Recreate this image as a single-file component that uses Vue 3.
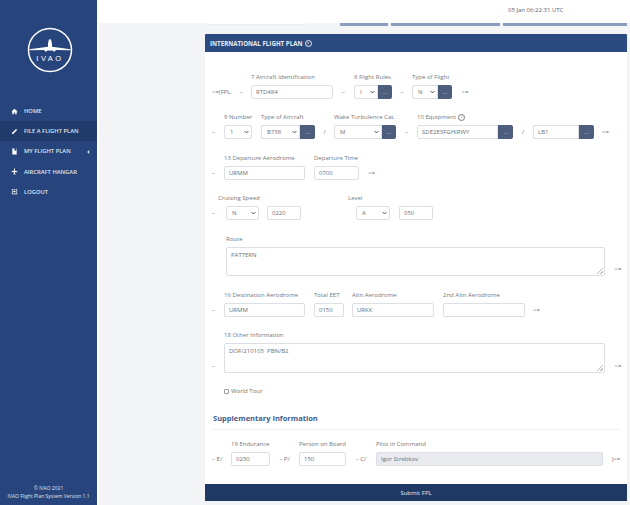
<script setup>
const menu = [
  { name: 'HOME', icon: 'home' },
  { name: 'FILE A FLIGHT PLAN', icon: 'pencil', active: true },
  { name: 'MY FLIGHT PLAN', icon: 'book', arrow: true },
  { name: 'AIRCRAFT HANGAR', icon: 'plane' },
  { name: 'LOGOUT', icon: 'logout' }
]

const icons = {
  home: 'M8 1.500 1 8h2v6h3.500v-4h3v4H13V8h2z',
  pencil: 'M11.500 2 14 4.500 5.500 13 2 14l1-3.500z',
  book: 'M3 1h10v14H3zM8 1v6l2-1.500L12 7V1z',
  plane: 'M7 1h2l.6 5 5.400 2v1.600L9.600 9l-.5 3.600 2 1.400v1L8 14.400 4.900 15v-1l2-1.400L6.400 9 1 9.600V8l5.400-2z',
  logout: 'M2 2h12v12H2zM3.500 3.500v9h9v-9zM5 7h3V5l3 3-3 3V9H5z'
}

const rows = [
  {
    items: [
      { text: '<=(FPL', w: 27, lead: true },
      { text: '–', w: 19 },
      { label: '7 Aircraft Identification', ctl: 'input', v: 'RTD484', w: 82 },
      { text: '–', w: 21 },
      { label: '8 Flight Rules', ctl: 'select', v: 'I', w: 24, btn: 14 },
      { text: '–', w: 20 },
      { label: 'Type of Flight', ctl: 'select', v: 'N', w: 26, btn: 14 },
      { text: '<=', w: 26 }
    ]
  },
  {
    tight: true,
    items: [
      { text: '–', w: 19, lead: true },
      { label: '9 Number', ctl: 'select', v: '1', w: 28 },
      { w: 9 },
      { label: 'Type of Aircraft', ctl: 'select', v: 'B738', w: 39, btn: 15 },
      { text: '/', w: 19 },
      { label: 'Wake Turbulence Cat.', ctl: 'select', v: 'M', w: 48, btn: 14 },
      { text: '–', w: 21 },
      { label: '10 Equipment', help: true, ctl: 'input', v: 'SDE2E3FGHIRWY', w: 81, btn: 15 },
      { text: '/', w: 20 },
      { label: '', ctl: 'input', v: 'LB1', w: 46, btn: 15 },
      { text: '<=', w: 23 }
    ]
  },
  {
    items: [
      { text: '–', w: 19, lead: true },
      { label: '13 Departure Aerodrome', ctl: 'input', v: 'URMM', w: 81 },
      { w: 9 },
      { label: 'Departure Time', ctl: 'input', v: '0700', w: 45 },
      { text: '<=', w: 25 }
    ]
  },
  {
    tight: true,
    items: [
      { text: '–', w: 21, lead: true },
      { label: 'Cruising Speed', shift: true, ctl: 'select', v: 'N', w: 33 },
      { w: 8 },
      { label: '', ctl: 'input', v: '0220', w: 34 },
      { w: 55 },
      { label: 'Level', shift: true, ctl: 'select', v: 'A', w: 34 },
      { w: 9 },
      { label: '', ctl: 'input', v: '050', w: 34 }
    ]
  },
  {
    items: [
      { w: 21 },
      { label: 'Route', ctl: 'area', v: 'PATTERN', w: 379, h: 29 },
      { text: '<=', w: 26 }
    ]
  },
  {
    items: [
      { text: '–', w: 19, lead: true },
      { label: '16 Destination Aerodrome', ctl: 'input', v: 'URMM', w: 81 },
      { w: 9 },
      { label: 'Total EET', ctl: 'input', v: '0150', w: 30 },
      { w: 8 },
      { label: 'Altn Aerodrome', ctl: 'input', v: 'URKK', w: 82 },
      { w: 9 },
      { label: '2nd Altn Aerodrome', ctl: 'input', v: '', w: 82 },
      { text: '<=', w: 23 }
    ]
  },
  {
    tight: true,
    items: [
      { text: '–', w: 19, lead: true },
      { label: '18 Other Information', ctl: 'area', v: 'DOF/210105  PBN/B2', w: 381, h: 30 },
      { text: '<=', w: 26 }
    ]
  }
]

const supplementary = [
  { text: '– E/', w: 26, lead: true },
  { label: '19 Endurance', ctl: 'input', v: '0230', w: 39 },
  { text: '– P/', w: 29 },
  { label: 'Person on Board', ctl: 'input', v: '150', w: 47 },
  { text: '– C/', w: 30 },
  { label: 'Pilot in Command', ctl: 'input', v: 'Igor Strebkov', w: 227, grey: true },
  { text: ')<=', w: 26 }
]
</script>

<template>
  <div class="page">
    <aside class="sidebar">
      <div class="logo">
        <svg width="46" height="46" viewBox="0 0 46 46">
          <circle cx="23" cy="23" r="21.500" fill="none" stroke="#fff" stroke-width="1.500" />
          <path fill="#fff" d="M21 18c0-3 1-6 2-6s2 3 2 6v1.800l18.500 2.400v1l-14.500-.3-1.200 1.700h-1l-1.300-1.100h-5l-1.300 1.100h-1L17 22.900l-14.500.3v-1L21 19.800z" />
          <text x="23" y="33.500" class="logo-text" text-anchor="middle">IVAO</text>
        </svg>
      </div>
      <nav class="menu">
        <div v-for="m in menu" :key="m.name" class="menu-item" :class="{ active: m.active }">
          <svg class="menu-icon" viewBox="0 0 16 16"><path fill="#fff" fill-rule="evenodd" :d="icons[m.icon]" /></svg>
          <span>{{ m.name }}</span>
          <svg v-if="m.arrow" class="menu-arrow" viewBox="0 0 4 6"><path fill="#dfe5f2" d="M3 0v6L0 3z" /></svg>
        </div>
      </nav>
      <footer class="side-footer">
        <div>© IVAO 2021</div>
        <div>IVAO Flight Plan System Version 1.1</div>
      </footer>
    </aside>

    <main class="main">
      <header class="topbar"><span class="clock">05 Jan 06:22:31 UTC</span></header>
      <div class="content">
        <div class="strip">
          <div class="strip-card"></div>
          <div class="strip-btn one"></div>
          <div class="strip-btn two"></div>
          <div class="strip-btn three"></div>
        </div>

        <section class="card">
          <div class="card-title">INTERNATIONAL FLIGHT PLAN <span class="help light">?</span></div>
          <div class="card-body">
            <div v-for="(row, r) in rows" :key="r" class="row" :class="{ tight: row.tight }">
              <template v-for="(it, i) in row.items" :key="i">
                <div v-if="it.ctl" class="field">
                  <div class="label" :class="{ shift: it.shift }">{{ it.label }}<span v-if="it.help" class="help">?</span></div>
                  <div class="control">
                    <textarea v-if="it.ctl === 'area'" class="box area" :style="{ width: it.w + 'px', height: it.h + 'px' }" :value="it.v"></textarea>
                    <div v-else-if="it.ctl === 'select'" class="select-wrap" :style="{ width: it.w + 'px' }">
                      <select class="box pick" :class="{ joined: it.btn }"><option>{{ it.v }}</option></select>
                      <svg class="chevron" viewBox="0 0 8 6"><path d="M1 1.500 4 4.500 7 1.500" fill="none" stroke="#444" stroke-width="1.500" /></svg>
                    </div>
                    <input v-else class="box" :class="{ joined: it.btn, grey: it.grey }" :style="{ width: it.w + 'px' }" :value="it.v" :readonly="it.grey" />
                    <button v-if="it.btn" class="more" :style="{ width: it.btn + 'px' }">...</button>
                  </div>
                </div>
                <div v-else class="sep" :class="{ lead: it.lead }" :style="{ width: it.w + 'px' }">{{ it.text }}</div>
              </template>
            </div>

            <label class="tour"><input type="checkbox" class="check" /> World Tour</label>

            <h3 class="supp-title">Supplementary Information</h3>
            <div class="rule"></div>

            <div class="row supp-row">
              <template v-for="(it, i) in supplementary" :key="i">
                <div v-if="it.ctl" class="field">
                  <div class="label">{{ it.label }}</div>
                  <div class="control">
                    <input class="box" :class="{ grey: it.grey }" :style="{ width: it.w + 'px' }" :value="it.v" :readonly="it.grey" />
                  </div>
                </div>
                <div v-else class="sep" :class="{ lead: it.lead }" :style="{ width: it.w + 'px' }">{{ it.text }}</div>
              </template>
            </div>
          </div>
          <button class="submit">Submit FPL</button>
        </section>
      </div>
    </main>
  </div>
</template>

<style scoped>
.page {
  display: flex;
  width: 630px;
  height: 505px;
  overflow: hidden;
  background: #f3f4f6;
  font-family: "Open Sans", sans-serif;
  font-size: 6px;
  color: #6d7176;
}

.sidebar {
  display: flex;
  flex-direction: column;
  width: 97px;
  flex: none;
  background: #27457c;
  color: #dfe5f2;
}

.logo {
  display: flex;
  justify-content: center;
  padding: 27px 0 0 2px;
  height: 74px;
}

.logo-text {
  fill: #fff;
  font-family: "Liberation Sans", sans-serif;
  font-size: 7.500px;
  letter-spacing: 2.500px;
}

.menu {
  flex: 1;
}

.menu-item {
  display: flex;
  align-items: center;
  height: 20.200px;
  padding-left: 11px;
  font-weight: 600;
  font-size: 5.800px;
  position: relative;
}

.menu-item.active {
  background: #213b6c;
}

.menu-icon {
  width: 7px;
  height: 7px;
  margin-right: 6px;
  flex: none;
}

.menu-arrow {
  position: absolute;
  left: 87px;
  top: 8.500px;
  width: 3px;
  height: 4px;
}

.side-footer {
  text-align: center;
  font-size: 5px;
  line-height: 7.500px;
  padding-bottom: 5px;
}

.main {
  flex: 1;
  min-width: 0;
  border-left: 2px solid #fff;
}

.topbar {
  height: 23px;
  background: #fff;
  position: relative;
}

.clock {
  position: absolute;
  left: 409px;
  top: 6px;
  font-size: 6px;
  color: #60646a;
}

.content {
  padding: 0 3px 0 106px;
}

.strip {
  display: flex;
  height: 12px;
  margin-top: -1px;
}

.strip-card {
  width: 102px;
  height: 3px;
  background: #fff;
  border: 1px solid #eceef1;
  border-top: none;
  box-sizing: border-box;
}

.strip-btn {
  height: 4px;
  background: #8a9bbb;
  border-radius: 0 0 1px 1px;
}

.one {
  width: 48px;
  margin-left: 33px;
}

.two {
  width: 109px;
  margin-left: 3px;
}

.three {
  width: 124px;
  margin-left: 3px;
}

.card {
  background: #fff;
}

.card-title {
  display: flex;
  align-items: center;
  gap: 2px;
  height: 18px;
  padding-left: 5px;
  background: #2a4a80;
  color: #e6eaf3;
  font-weight: 700;
  font-size: 6.200px;
  border-radius: 1px 1px 0 0;
}

.card-body {
  height: 432px;
  padding-top: 21px;
  box-sizing: border-box;
}

.row {
  display: flex;
  align-items: flex-end;
  margin-top: 15px;
}

.row:first-child {
  margin-top: 0;
}

.row.tight {
  margin-top: 14px;
}

.field {
  flex: none;
}

.label {
  height: 9px;
  line-height: 9px;
  margin-bottom: 3px;
  white-space: nowrap;
  width: 0;
  color: #74787d;
}

.label.shift {
  margin-left: -8px;
}

.help {
  display: inline-block;
  width: 5px;
  height: 5px;
  line-height: 5px;
  margin-left: 2px;
  text-align: center;
  font-size: 4px;
  border: 0.700px solid currentColor;
  border-radius: 50%;
}

.help.light {
  margin-left: 0;
  font-weight: 700;
}

.control {
  display: flex;
  height: 14px;
  align-items: stretch;
}

.control:has(.area) {
  height: auto;
}

.box {
  display: block;
  box-sizing: border-box;
  height: 14px;
  margin: 0;
  padding: 0 4px;
  background: #fff;
  border: 1px solid #dcdfe4;
  border-radius: 2px;
  outline: none;
  font-family: inherit;
  font-size: 6px;
  color: #6d7176;
}

.box.joined {
  border-radius: 2px 0 0 2px;
}

.box.grey {
  background: #e8eaed;
}

.area {
  padding-top: 3px;
  line-height: 8px;
}

.area::-webkit-resizer {
  background: linear-gradient(135deg, transparent 45%, #b9bcc0 45%, #b9bcc0 58%, transparent 58%, transparent 72%, #b9bcc0 72%, #b9bcc0 85%, transparent 85%) no-repeat right 1px bottom 1px / 6px 6px;
}

.select-wrap {
  position: relative;
}

.pick {
  width: 100%;
  padding-left: 5px;
  appearance: none;
}

.chevron {
  position: absolute;
  right: 3px;
  top: 5px;
  width: 5px;
  height: 4px;
}

.more {
  padding: 0;
  margin: 0;
  background: #4d5e7c;
  border: none;
  border-radius: 0 2px 2px 0;
  color: #c8d0df;
  font-family: inherit;
  font-size: 6px;
  line-height: 14px;
}

.sep {
  flex: none;
  box-sizing: border-box;
  height: 14px;
  line-height: 14px;
  text-align: center;
  white-space: nowrap;
}

.sep.lead {
  padding-left: 7px;
  text-align: left;
}

.tour {
  display: flex;
  align-items: center;
  gap: 2px;
  height: 10px;
  margin: 13px 0 0 19px;
}

.check {
  appearance: none;
  width: 5px;
  height: 5px;
  margin: 0;
  border: 1px solid #9a9ea3;
  border-radius: 1px;
}

.supp-title {
  margin: 17px 0 0 8px;
  height: 10px;
  line-height: 10px;
  font-size: 7.500px;
  font-weight: 700;
  color: #3f5b8e;
}

.rule {
  height: 1px;
  margin: 6px 7px 0;
  background: #eef0f2;
}

.supp-row {
  margin-top: 10px;
}

.submit {
  display: block;
  width: 100%;
  height: 17px;
  padding: 0;
  background: #1f3864;
  border: none;
  color: #e6eaf3;
  font-family: inherit;
  font-size: 6px;
}
</style>
